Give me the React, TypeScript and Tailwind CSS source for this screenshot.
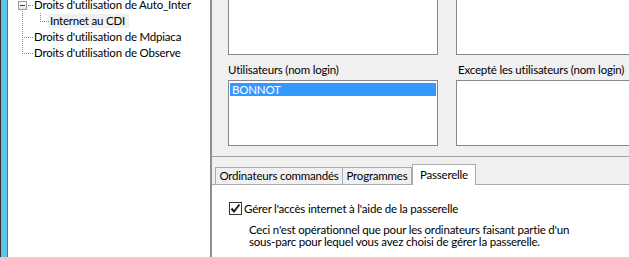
import React from "react";

const dots = (x1: number, y1: number, x2: number, y2: number) => {
  const out: React.ReactElement[] = [];
  if (y1 === y2) {
    for (let x = x1; x <= x2; x += 2) out.push(<rect key={`h${x}-${y1}`} x={x} y={y1} width={1} height={1} />);
  } else {
    for (let y = y1; y <= y2; y += 2) out.push(<rect key={`v${x1}-${y}`} x={x1} y={y} width={1} height={1} />);
  }
  return out;
};

const TreeLines = () => (
  <svg className="absolute left-0 top-0" width="60" height="60" viewBox="0 0 60 60">
    <g fill="#8a8a8a">
      {dots(20, 5, 24, 5)}
      {dots(14, 11, 14, 53)}
      {dots(16, 37, 24, 37)}
      {dots(16, 53, 24, 53)}
      {dots(32, 13, 32, 21)}
      {dots(34, 21, 40, 21)}
    </g>
    <defs>
      <linearGradient id="pm" x1="0" y1="0" x2="0" y2="1">
        <stop offset="0" stopColor="#ffffff" />
        <stop offset="1" stopColor="#e3e3e3" />
      </linearGradient>
    </defs>
    <rect x="10.5" y="1.5" width="8" height="8" fill="url(#pm)" stroke="#9a9a9a" />
    <rect x="12" y="5" width="5" height="1" fill="#3c3c3c" />
  </svg>
);

const Checkbox = () => (
  <div className="w-[13px] h-[13px] border border-[#333333] bg-white flex items-center justify-center shrink-0">
    <svg width="11" height="11" viewBox="0 0 11 11">
      <path d="M1.5 5.5 L4 8.5 L9.5 1.5" fill="none" stroke="#1a1a1a" strokeWidth="2" />
    </svg>
  </div>
);

export default function App() {
  const tree = [
    { label: "Droits d'utilisation de Auto_Inter", pad: "pl-[26px]", hi: false },
    { label: "Internet au CDI", pad: "pl-[42px]", hi: true },
    { label: "Droits d'utilisation de Mdpiaca", pad: "pl-[26px]", hi: false },
    { label: "Droits d'utilisation de Observe", pad: "pl-[26px]", hi: false },
  ];

  return (
    <div className="w-[629px] h-[257px] overflow-hidden flex bg-white text-[11.5px] tracking-[-0.2px] text-black font-['Lato','Liberation_Sans',sans-serif]">
      {/* blue window edge */}
      <div className="flex shrink-0">
        <div className="w-px bg-[#2f2f2f]" />
        <div className="w-[6px] bg-[#63c3e7]" />
        <div className="w-px bg-[#3b7d9c]" />
      </div>

      {/* tree */}
      <div className="relative w-[202px] shrink-0 bg-white">
        <TreeLines />
        <ul className="-mt-[3px] flex flex-col">
          {tree.map((row) => (
            <li key={row.label} className={`h-[16px] flex items-center ${row.pad}`}>
              <span
                className={
                  row.hi
                    ? "h-[14px] leading-[14px] pl-[2px] pr-[4px] -ml-[2px] bg-[#f0f0f0] whitespace-nowrap"
                    : "leading-[14px] whitespace-nowrap"
                }
              >
                {row.label}
              </span>
            </li>
          ))}
        </ul>
      </div>

      {/* splitter */}
      <div className="w-[2px] shrink-0 bg-[#8f8f8f]" />

      {/* right side */}
      <div className="flex-1 min-w-0 flex flex-col overflow-hidden">
        <div className="flex gap-[18px] pl-[16px] pb-[10px] bg-[#f0f0f0] border-b border-[#a0a0a0]">
          <div className="w-[210px] shrink-0 flex flex-col">
            <div className="-mt-[20px] h-[75px] border border-[#828790] bg-white" />
            <div className="mt-[7px] h-[16px] leading-[16px] whitespace-nowrap">Utilisateurs (nom login)</div>
            <div className="mt-[2px] h-[66px] border border-[#828790] bg-white pt-[2px] pl-px pr-px">
              <div className="h-[13px] leading-[13px] bg-[#3399ff] text-white pl-[2px]">BONNOT</div>
            </div>
          </div>
          <div className="w-[210px] shrink-0 flex flex-col">
            <div className="-mt-[20px] h-[75px] border border-[#828790] bg-white" />
            <div className="mt-[7px] h-[16px] leading-[16px] pl-[2px] whitespace-nowrap">Excepté les utilisateurs (nom login)</div>
            <div className="mt-[2px] h-[66px] border border-[#828790] bg-white" />
          </div>
        </div>

        {/* tabs */}
        <div className="h-[27px] bg-[#f0f0f0] flex items-end pl-[3px]">
          <div className="w-[128px] h-[17px] border-l border-t border-r border-[#acacac] bg-[#f0f0f0] flex items-center justify-center whitespace-nowrap">
            Ordinateurs commandés
          </div>
          <div className="w-[69px] h-[17px] border-t border-r border-[#acacac] bg-[#f0f0f0] flex items-center justify-center whitespace-nowrap">
            Programmes
          </div>
          <div className="relative z-10 -mb-px w-[64px] h-[21px] border-l border-t border-r border-[#acacac] bg-white flex items-start justify-center pt-[1px] whitespace-nowrap">
            Passerelle
          </div>
        </div>

        {/* tab page */}
        <div className="flex-1 bg-white border-t border-[#acacac] pl-[17px] pt-[17px]">
          <div className="flex items-center gap-[2px] h-[13px]">
            <Checkbox />
            <span className="whitespace-nowrap">Gérer l'accès internet à l'aide de la passerelle</span>
          </div>
          <p className="mt-[9px] pl-[20px] leading-[12px] whitespace-nowrap">
            Ceci n'est opérationnel que pour les ordinateurs faisant partie d'un
            <br />
            sous-parc pour lequel vous avez choisi de gérer la passerelle.
          </p>
        </div>
      </div>
    </div>
  );
}
